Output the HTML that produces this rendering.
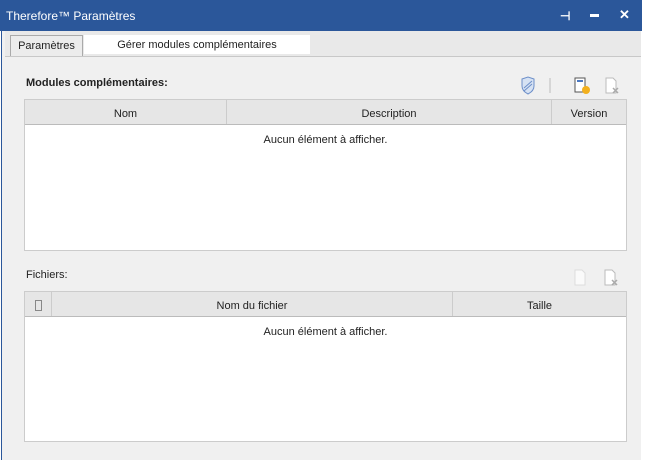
<!DOCTYPE html>
<html><head><style>
*{margin:0;padding:0;box-sizing:border-box}
body{width:645px;height:464px;background:#fff;font-family:"Liberation Sans",sans-serif;font-size:11px;color:#222;position:relative;overflow:hidden}
.a{position:absolute}
.win{left:1px;top:0;width:640px;height:460px;background:#f0f0f0;border-left:1px solid #2b579a}
.title{left:0;top:0;width:642px;height:31px;background:#2b579a;color:#fff;font-size:12px;padding:9px 6px}
.tabs{left:5px;top:31px;width:636px;height:26px;background:#e9e9e9;border-bottom:1px solid #c8c8c8}
.tbl{background:#fff;border:1px solid #ccc}
.hd{background:#e6e6e6;border-bottom:1px solid #bbb;height:25px}
.c{position:absolute;top:0;height:24px;line-height:28px;text-align:center;border-right:1px solid #ccc}
</style></head><body>
<div class="a win"></div>
<div class="a title">Therefore™ Paramètres
<span class="a" style="left:560px;top:9px;font-weight:bold">⊣</span>
<span class="a" style="left:590px;top:14px;width:9px;height:3px;background:#fff"></span>
<span class="a" style="left:619px;top:7px;font-weight:bold;font-size:13px">✕</span>
</div>
<div class="a tabs"></div>
<div class="a" style="left:10px;top:35px;width:73px;height:21px;border:1px solid #aaa;border-bottom:none;background:#ececec;text-align:center;line-height:20px">Paramètres</div>
<div class="a" style="left:84px;top:35px;width:226px;height:19px;background:#fff;text-align:center;line-height:20px">Gérer modules complémentaires</div>
<div class="a" style="left:26px;top:77px;font-weight:bold">Modules complémentaires:</div>
<svg class="a" style="left:520px;top:76px" width="110" height="20">
<path d="M2 3 L8 1 L14 3 L14 10 Q14 15 8 18 Q2 15 2 10Z" fill="#d6e2f3" stroke="#6d8fc9"/>
<path d="M4 12 L12 5 M4 15 L12 8" stroke="#6d8fc9"/>
<line x1="30" y1="2" x2="30" y2="17" stroke="#bbb"/>
<rect x="55" y="2" width="10" height="14" fill="#fff" stroke="#555"/><rect x="57" y="4" width="6" height="2" fill="#4a78c2"/>
<circle cx="66" cy="14" r="4" fill="#f2b01e"/>
<path d="M86 2 h7 l3 3 v12 h-10z" fill="#fff" stroke="#bbb"/><path d="M93 12 l5 5 M98 12 l-5 5" stroke="#aaa" stroke-width="1.5"/>
</svg>
<div class="a tbl" style="left:24px;top:99px;width:603px;height:152px">
<div class="hd" style="position:relative">
<div class="c" style="left:0;width:202px">Nom</div>
<div class="c" style="left:202px;width:325px">Description</div>
<div class="c" style="left:527px;width:74px;border:none">Version</div>
</div>
<div style="text-align:center;margin-top:9px">Aucun élément à afficher.</div>
</div>
<div class="a" style="left:26px;top:269px">Fichiers:</div>
<svg class="a" style="left:570px;top:268px" width="60" height="20">
<path d="M5 2 h7 l3 3 v12 h-10z" fill="#fafafa" stroke="#ddd"/>
<path d="M35 2 h7 l3 3 v12 h-10z" fill="#fff" stroke="#bbb"/><path d="M42 12 l5 5 M47 12 l-5 5" stroke="#aaa" stroke-width="1.5"/>
</svg>
<div class="a tbl" style="left:24px;top:291px;width:603px;height:151px">
<div class="hd" style="position:relative">
<div class="c" style="left:0;width:27px;line-height:normal"><span style="display:inline-block;width:7px;height:11px;border:1px solid #888;margin-top:8px"></span></div>
<div class="c" style="left:27px;width:401px">Nom du fichier</div>
<div class="c" style="left:428px;width:173px;border:none">Taille</div>
</div>
<div style="text-align:center;margin-top:9px">Aucun élément à afficher.</div>
</div>
</body></html>
